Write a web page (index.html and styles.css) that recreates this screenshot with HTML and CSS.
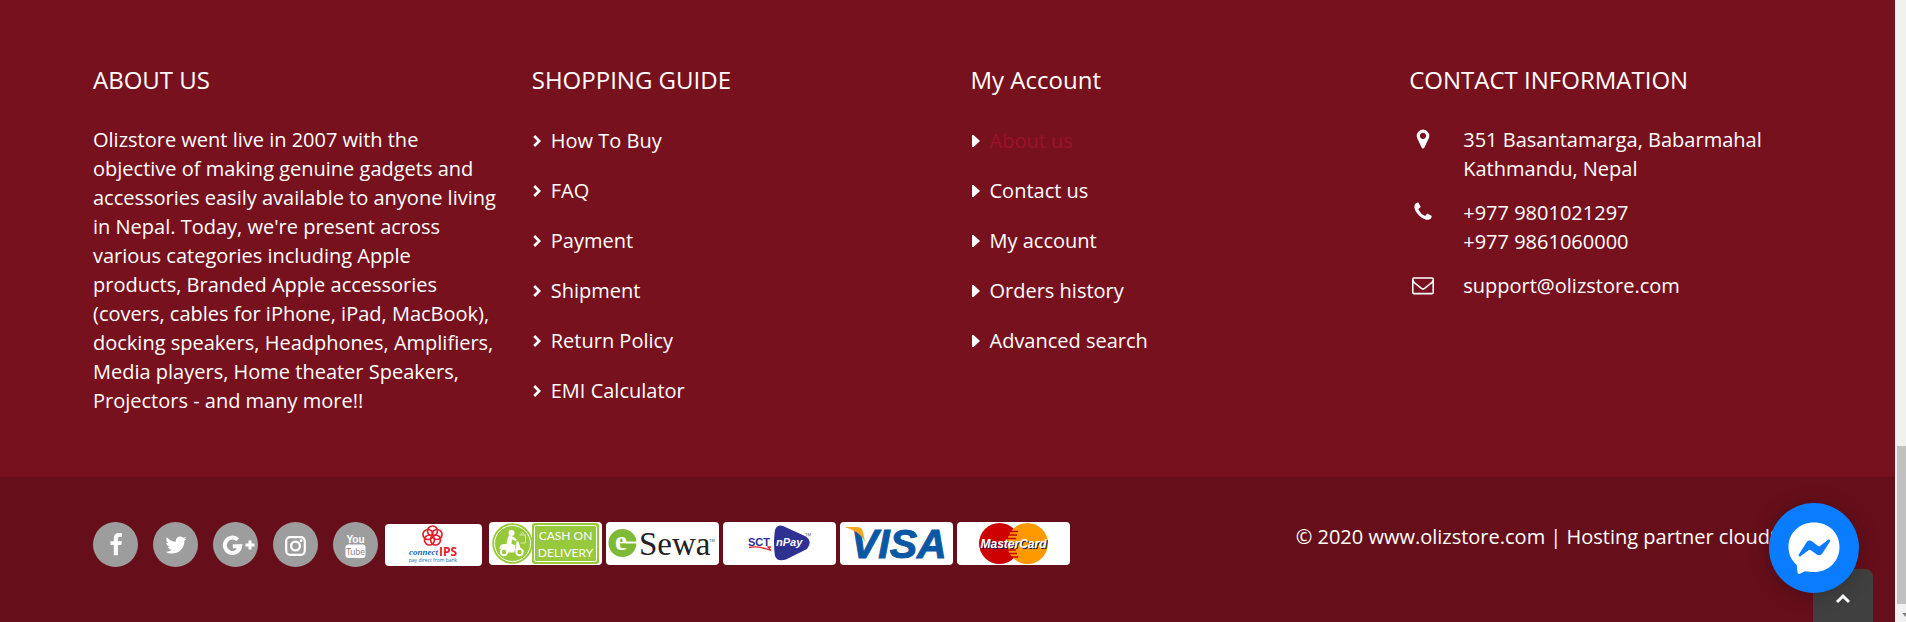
FILE: index.html
```html
<!DOCTYPE html>
<html lang="en">
<head>
<meta charset="utf-8">
<title>Olizstore</title>
<link rel="stylesheet" href="styles.css">
</head>
<body>
<svg class="sprite" aria-hidden="true">
  <symbol id="angle" viewBox="0 0 8 12"><path d="M1.200 1 6.200 6l-5 5" fill="none" stroke="currentColor" stroke-width="2.700"/></symbol>
  <symbol id="caret" viewBox="0 0 8 12"><path d="M0 0h1.500L8 6l-6.500 6H0z" fill="currentColor"/></symbol>
</svg>
<div class="page">
  <footer class="footer">
    <div class="columns">
      <section class="column">
        <h2 class="heading">ABOUT US</h2>
        <p class="about">Olizstore went live in 2007 with the objective of making genuine gadgets and accessories easily available to anyone living in Nepal. Today, we're present across various categories including Apple products, Branded Apple accessories (covers, cables for iPhone, iPad, MacBook), docking speakers, Headphones, Amplifiers, Media players, Home theater Speakers, Projectors - and many more!!</p>
      </section>
      <section class="column">
        <h2 class="heading">SHOPPING GUIDE</h2>
        <ul class="links">
          <li><svg class="bullet"><use href="#angle"/></svg><a href="#">How To Buy</a></li>
          <li><svg class="bullet"><use href="#angle"/></svg><a href="#">FAQ</a></li>
          <li><svg class="bullet"><use href="#angle"/></svg><a href="#">Payment</a></li>
          <li><svg class="bullet"><use href="#angle"/></svg><a href="#">Shipment</a></li>
          <li><svg class="bullet"><use href="#angle"/></svg><a href="#">Return Policy</a></li>
          <li><svg class="bullet"><use href="#angle"/></svg><a href="#">EMI Calculator</a></li>
        </ul>
      </section>
      <section class="column">
        <h2 class="heading">My Account</h2>
        <ul class="links">
          <li><svg class="bullet"><use href="#caret"/></svg><a href="#" class="active">About us</a></li>
          <li><svg class="bullet"><use href="#caret"/></svg><a href="#">Contact us</a></li>
          <li><svg class="bullet"><use href="#caret"/></svg><a href="#">My account</a></li>
          <li><svg class="bullet"><use href="#caret"/></svg><a href="#">Orders history</a></li>
          <li><svg class="bullet"><use href="#caret"/></svg><a href="#">Advanced search</a></li>
        </ul>
      </section>
      <section class="column">
        <h2 class="heading">CONTACT INFORMATION</h2>
        <ul class="contact">
          <li>
            <svg class="contact-icon" viewBox="0 0 1792 1792"><path d="M1152 640q0-106-75-181t-181-75-181 75-75 181 75 181 181 75 181-75 75-181zm256 0q0 109-33 179l-364 774q-16 33-47.500 52t-67.500 19-67.500-19-46.500-52l-365-774q-33-70-33-179 0-212 150-362t362-150 362 150 150 362z"/></svg>
            <span>351 Basantamarga, Babarmahal<br>Kathmandu, Nepal</span>
          </li>
          <li>
            <svg class="contact-icon" viewBox="0 0 1792 1792"><path d="M1600 1240q0 27-10 70.500t-21 68.500q-21 50-122 106-94 51-186 51-27 0-53-3.500t-57.500-12.500-47-14.500-55.500-20.500-49-18q-98-35-175-83-127-79-264-216t-216-264q-48-77-83-175-3-9-18-49t-20.500-55.500-14.500-47-12.500-57.500-3.500-53q0-92 51-186 56-101 106-122 25-11 68.500-21t70.500-10q14 0 21 3 18 6 53 76 11 19 30 54t35 63.500 31 53.500q3 4 17.500 25t21.500 35.500 7 28.500q0 20-28.500 50t-62 55-62 53-28.500 46q0 9 5 22.500t8.500 20.500 14 24 11.500 19q76 137 174 235t235 174q2 1 19 11.500t24 14 20.500 8.500 22.500 5q18 0 46-28.500t53-62 55-62 50-28.500q14 0 28.500 7t35.500 21.500 25 17.500q25 15 53.500 31t63.500 35 54 30q70 35 76 53 3 7 3 21z"/></svg>
            <span>+977 9801021297<br>+977 9861060000</span>
          </li>
          <li>
            <svg class="contact-icon" viewBox="0 0 1792 1792"><path d="M1664 1504v-768q-32 36-69 66-268 206-426 338-51 43-83 67t-86.500 48.500-102.500 24.500h-2q-48 0-102.500-24.500t-86.500-48.500-83-67q-158-132-426-338-37-30-69-66v768q0 13 9.500 22.500t22.500 9.500h1472q13 0 22.500-9.500t9.500-22.500zm0-1051v-24.500l-.5-13-3-12.500-5.500-9-9-7.500-14-2.500h-1472q-13 0-22.500 9.500t-9.500 22.500q0 168 147 284 193 152 401 317 6 5 35 29.500t46 37.500 44.500 31.500 50.500 27.500 43 9h2q20 0 43-9t50.500-27.500 44.500-31.500 46-37.500 35-29.500q208-165 401-317 54-43 100.500-115.500t46.500-131.500zm128-37v1088q0 66-47 113t-113 47h-1472q-66 0-113-47t-47-113v-1088q0-66 47-113t113-47h1472q66 0 113 47t47 113z"/></svg>
            <span>support@olizstore.com</span>
          </li>
        </ul>
      </section>
    </div>
  </footer>

  <div class="bottom">
    <nav class="social" aria-label="Social networks">
      <a href="#" aria-label="Facebook"><svg viewBox="0 0 1792 1792"><path fill="currentColor" d="M1343 12v264h-157q-86 0-116 36t-30 108v189h293l-39 296h-254v759h-306v-759h-255v-296h255v-218q0-186 104-288.500t277-102.500q147 0 228 12z"/></svg></a>
      <a href="#" aria-label="Twitter"><svg viewBox="0 0 1792 1792"><path fill="currentColor" d="M1684 408q-67 98-162 167 1 14 1 42 0 130-38 259.500t-115.500 248.500-184.500 210.500-258 146-323 54.500q-271 0-496-145 35 4 78 4 225 0 401-138-105-2-188-64.500t-114-159.500q33 5 61 5 43 0 85-11-112-23-185.500-111.500t-73.500-205.500v-4q68 38 146 41-66-44-105-115t-39-154q0-88 44-163 121 149 294.500 238.500t371.500 99.500q-8-38-8-74 0-134 94.500-228.500t228.500-94.500q140 0 236 102 109-21 205-78-37 115-142 178 93-10 186-50z"/></svg></a>
      <a href="#" aria-label="Google Plus"><svg class="wide" viewBox="0 0 45 45"><g fill="none" stroke="currentColor"><path stroke-width="4" d="M24.800 17.600A7.700 7.700 0 1 0 27.200 24.300H19.800"/><path stroke-width="3" d="M37 18.500v9M32.500 23h9"/></g></svg></a>
      <a href="#" aria-label="Instagram"><svg class="wide" viewBox="0 0 45 45"><g fill="none" stroke="currentColor"><rect x="13.200" y="15.200" width="18.600" height="17.600" rx="4" stroke-width="2.200"/><circle cx="22.500" cy="24" r="4.400" stroke-width="2.400"/></g><circle cx="28.200" cy="18.700" r="1.400" fill="currentColor"/></svg></a>
      <a href="#" aria-label="YouTube"><svg class="wide" viewBox="0 0 45 45"><text x="22.500" y="21" text-anchor="middle" class="yt-top">You</text><rect x="12.500" y="22.500" width="20" height="13.500" rx="3" fill="currentColor"/><text x="22.500" y="33" text-anchor="middle" class="yt-bottom">Tube</text></svg></a>
    </nav>

    <div class="payments">
      <svg class="card card-ips" viewBox="0 0 97 42" role="img" aria-label="connectIPS">
        <g fill="none" stroke="#e3202b" stroke-width="1.700"><circle cx="47.500" cy="7" r="5"/><circle cx="52" cy="10.500" r="5"/><circle cx="50.500" cy="16" r="5"/><circle cx="44.500" cy="16" r="5"/><circle cx="43" cy="10.500" r="5"/></g>
        <text x="24" y="31" class="ips-connect">connect</text>
        <text x="54" y="31.500" class="ips-name">IPS</text>
        <text x="48" y="38" text-anchor="middle" class="ips-tag">pay direct from bank</text>
      </svg>
      <svg class="card" viewBox="0 0 113 43" role="img" aria-label="Cash on delivery">
        <circle cx="23.500" cy="21.500" r="20.300" fill="#98c93c"/><circle cx="23.500" cy="21.500" r="18" fill="none" stroke="#fff" stroke-width="1"/>
        <circle cx="15" cy="30" r="3.200" fill="none" stroke="#fff" stroke-width="2"/><circle cx="30.500" cy="30" r="3.200" fill="none" stroke="#fff" stroke-width="2"/>
        <path d="M10.500 27q0-5 5-5h2l1.500-7q1-2 3-1.500l6 4-1 1.500-4-1.500-.5 4.500 4 1-.5 3.500h1l.5-7h2l2 7-2 .5q-4 0-4.500 3.500h-6q0-4-4-4.500z" fill="#fff"/>
        <path d="M30.500 13h6v8h-5M31.500 13q2-5 4 0" fill="none" stroke="#d5ebab"/>
        <circle cx="22.500" cy="11" r="3" fill="#fff"/>
        <rect x="43" y="1" width="67" height="41" rx="3" fill="#98c93c"/><rect x="45.500" y="3.500" width="62" height="36" rx="2" fill="none" stroke="#fff"/>
        <text x="76.500" y="18" text-anchor="middle" class="cod">CASH ON</text><text x="76.500" y="35" text-anchor="middle" class="cod">DELIVERY</text>
      </svg>
      <svg class="card" viewBox="0 0 113 43" role="img" aria-label="eSewa">
        <circle cx="16.500" cy="21" r="14" fill="#7dba35"/>
        <text x="15" y="28" text-anchor="middle" class="esewa-e">e</text><path d="M20 20.500h11" stroke="#fff" stroke-width="2"/>
        <text x="33" y="33" class="esewa">Sewa</text><text x="103" y="20" class="tm">TM</text>
      </svg>
      <svg class="card" viewBox="0 0 113 43" role="img" aria-label="SCT nPay">
        <path d="M52 8Q54 2 60 4L83 14.500Q90 19.500 84 27L63 37.500Q54 40 52 34Q50 21 52 8z" fill="#2e3192"/>
        <path d="M26 25.500q9-2 22 3l-3-3.500h3" fill="none" stroke="#e8262d" stroke-width="1.300"/>
        <text x="25" y="23.500" class="sct">SCT</text><text x="53" y="24" class="npay">nPay</text><text x="82" y="14" class="tm">TM</text>
      </svg>
      <svg class="card" viewBox="0 0 113 43" role="img" aria-label="Visa">
        <text x="11" y="36" class="visa">VISA</text>
        <path d="M4.500 5H17q5 0 6 5l2 10Q20 9 4.500 5z" fill="#f9a51a"/>
      </svg>
      <svg class="card" viewBox="0 0 113 43" role="img" aria-label="MasterCard">
        <circle cx="42.500" cy="21.500" r="20.500" fill="#cc0000"/><circle cx="70.500" cy="21.500" r="20.500" fill="#ff9900"/>
        <path d="M53 9.500h8M51 13h9M50 16.500h9M50 28h9M51 31.500h9M53 35h8" stroke="#cc0000" stroke-width="1.600"/>
        <text x="24.500" y="27" class="mc mc-shadow">MasterCard</text><text x="23.500" y="26" class="mc">MasterCard</text>
      </svg>
    </div>

    <p class="copyright">© 2020 www.olizstore.com | Hosting partner cloudS</p>
  </div>
</div>

<button class="to-top" aria-label="Back to top"><svg viewBox="0 0 16 10"><path d="m2 8 6-5.800L14 8" fill="none" stroke="#fff" stroke-width="3"/></svg></button>
<button class="messenger" aria-label="Open Messenger chat"><svg viewBox="0 0 52 52"><path fill="#fff" d="M26 .5C11.500.5.500 11 .5 25c0 7.500 3 13.500 8.300 18l.7 7.500c.1 1.200 1.300 1.700 2.300 1.200l5.200-2.500C19.500 49.800 22.500 50 26 50c14.500 0 25.500-10.500 25.500-25S40.500.500 26 .500z"/><path fill="#0a7cff" d="m10.800 32.500 7.700-12.100c1.200-1.900 3.800-2.400 5.600-1l6.100 4.500c.5.400 1.300.4 1.800 0l8.200-6.200c1.100-.8 2.500.5 1.800 1.700l-7.700 12.100c-1.200 1.900-3.800 2.400-5.600 1l-6.100-4.500c-.5-.4-1.300-.4-1.800 0l-8.200 6.200c-1.100.8-2.500-.5-1.800-1.700z"/></svg></button>
<div class="scrollbar" aria-hidden="true"><div class="thumb"></div><div class="arrow"></div></div>
</body>
</html>
```
FILE: styles.css
```css
* { box-sizing: border-box; }

body {
  margin: 0;
  display: flex;
  min-height: 100vh;
  background: #78111e;
  color: #fff;
  font: 20px/29px "Open Sans", sans-serif;
}

a { color: inherit; text-decoration: none; }
ul, p { margin: 0; padding: 0; list-style: none; }
button { border: 0; padding: 0; cursor: pointer; }

.sprite { position: absolute; width: 0; height: 0; }

.page {
  flex: 1;
  min-width: 0;
  display: flex;
  flex-direction: column;
}

.footer { padding: 64px 47px 62px 93px; }

.columns {
  display: grid;
  grid-template-columns: repeat(4, 1fr);
}

.column { padding-right: 33px; }

.heading {
  margin: 0 0 29px;
  font-size: 24px;
  line-height: 32px;
  font-weight: 400;
}

.links li {
  display: flex;
  align-items: center;
  height: 50px;
}

.links { margin-top: -10px; }

.bullet {
  width: 8px;
  height: 12px;
  margin: 2px 10px 0 1px;
}

.links .active { color: #991329; }

.contact {
  display: grid;
  gap: 15px;
}

.contact li { display: flex; }

.contact-icon {
  width: 22px;
  height: 22px;
  margin: 3px 29px 0 3px;
  fill: currentColor;
}

.bottom {
  flex: 1;
  display: flex;
  align-items: flex-start;
  padding: 45px 114px 46px 93px;
  background: #660f1a;
}

.social {
  display: flex;
  gap: 15px;
  margin-right: 7px;
}

.social a {
  display: grid;
  place-items: center;
  width: 45px;
  height: 45px;
  border-radius: 50%;
  background: #9d9d9d;
}

.social svg { width: 24px; height: 24px; }
.social .wide { width: 45px; height: 45px; }

.yt-top { font: bold 10px "Liberation Sans", sans-serif; fill: #fff; }
.yt-bottom { font: 9px Lato, sans-serif; fill: #8a8a8a; }

.payments {
  display: flex;
  gap: 4px;
}

.card {
  width: 113px;
  height: 43px;
  border-radius: 4px;
  background: #fff;
  overflow: visible;
}

.card-ips {
  width: 97px;
  height: 42px;
  margin: 2px 3px 0 0;
}

.ips-connect { font: italic bold 9px "Liberation Serif", serif; fill: #1769b0; }
.ips-name { font: bold 12px "Open Sans", sans-serif; fill: #e3202b; }
.ips-tag { font: 5px "Open Sans", sans-serif; fill: #1769b0; }
.cod { font: 12px Lato, sans-serif; fill: #fff; }
.esewa-e { font: bold 27px "Liberation Serif", serif; fill: #fff; }
.esewa { font: 33px "Liberation Serif", serif; fill: #222; }
.tm { font: 4px "Liberation Sans", sans-serif; fill: #444; }
.sct { font: bold 11px "Liberation Sans", sans-serif; fill: #2e3192; }
.npay { font: italic bold 11px "Liberation Sans", sans-serif; fill: #fff; }
.visa { font: italic bold 41px "Liberation Sans", sans-serif; fill: #0a58a3; stroke: #0a58a3; }
.mc { font: italic bold 12px "Liberation Sans", sans-serif; fill: #fff; }
.mc-shadow { fill: #1a1a5c; }

.copyright {
  margin: 0 0 0 auto;
  white-space: nowrap;
}

.messenger {
  position: fixed;
  right: 47px;
  bottom: 29px;
  display: grid;
  place-items: center;
  width: 90px;
  height: 90px;
  border-radius: 50%;
  background: #0a7cff;
  box-shadow: 0 2px 20px rgba(0, 0, 0, .25);
}

.messenger svg { width: 52px; height: 52px; }

.to-top {
  position: fixed;
  right: 33px;
  bottom: 0;
  width: 60px;
  height: 53px;
  padding-top: 8px;
  border-radius: 8px 8px 0 0;
  background: #404040;
}

.to-top svg { width: 16px; height: 10px; }

.scrollbar {
  display: flex;
  flex-direction: column;
  justify-content: flex-end;
  width: 11px;
  padding-left: 2px;
  overflow: hidden;
  background: #f1f1f1;
}

.thumb { height: 158px; background: #c1c1c1; }

.arrow {
  height: 18px;
  padding: 9px 0 0 5px;
}

.arrow::before {
  content: "";
  display: block;
  width: 8px;
  border: 4px solid transparent;
  border-top-color: #808080;
}
```
